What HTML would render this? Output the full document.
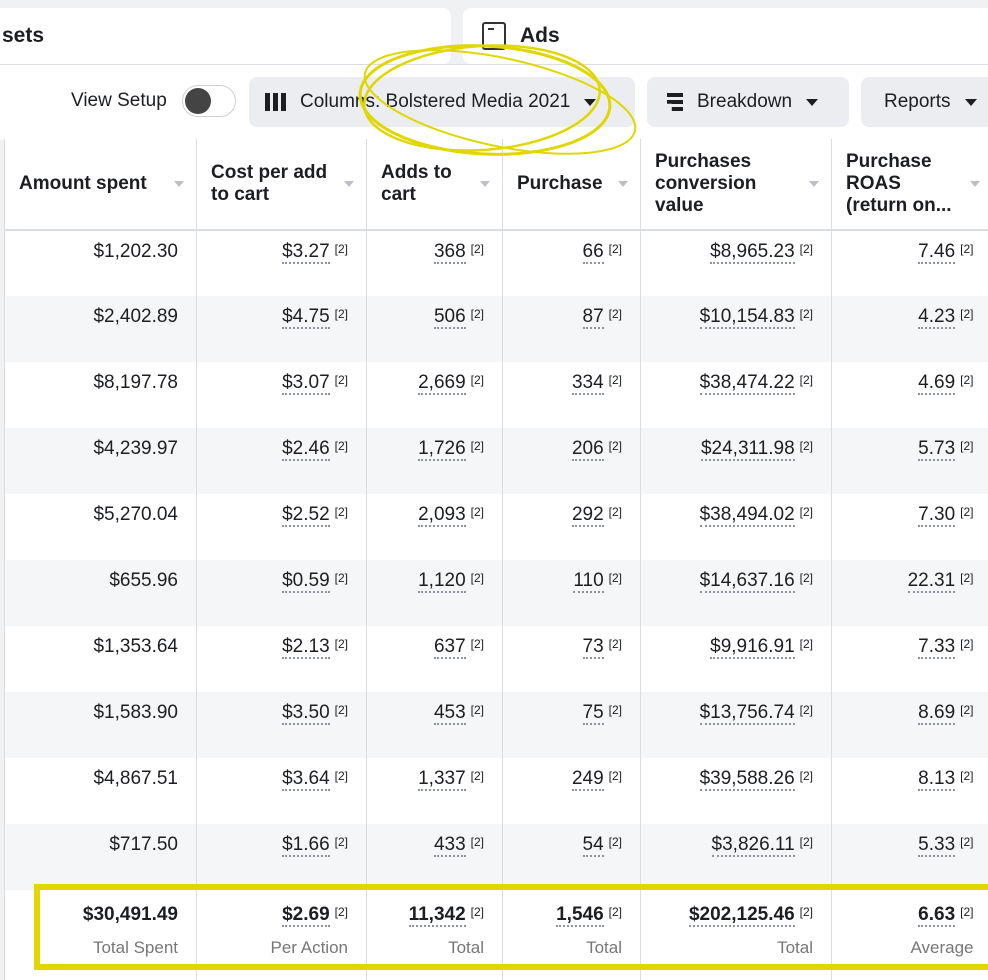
<!DOCTYPE html><html><head><style>
body{margin:0;width:988px;height:976px;overflow:hidden;background:#f0f1f3;font-family:"Liberation Sans",sans-serif;position:relative;color:#1c1e21}
.card{position:absolute;background:#fff;border-radius:8px}
.btn{position:absolute;top:77px;height:50px;background:#ebedf0;border-radius:8px;font-size:19px;display:flex;align-items:center;color:#1c1e21}
.tri{display:inline-block;width:0;height:0;border-left:6px solid transparent;border-right:6px solid transparent;border-top:7px solid #1c1e21;margin-left:14px}
table{position:absolute;left:4px;top:139px;border-collapse:collapse;background:#fff;table-layout:fixed;width:987px}
td,th{border-left:1px solid #dadde1;padding:0 18px 0 0;text-align:right;font-size:19px;vertical-align:top;white-space:nowrap;overflow:hidden}
th{height:90px;text-align:left;vertical-align:middle;padding-left:14px;font-weight:bold;border-bottom:2px solid #dadde1;position:relative;white-space:normal}
th .s{position:absolute;right:12px;top:42px;border-left:5px solid transparent;border-right:5px solid transparent;border-top:6px solid #bcc0c4}
td{height:66px;padding-top:10px;box-sizing:border-box}
tr.g td{background:#f5f6f7}
u{text-decoration:none;border-bottom:2px dotted #8d949e}
sup{font-size:12px;vertical-align:4px;margin-left:5px}
tr.t td{height:90px;padding-top:14px}
tr.t b{font-size:19px}
.l{display:block;color:#777;font-size:17px;margin-top:12px}
</style></head><body>
<div class="card" style="left:-10px;top:8px;width:461px;height:56px"></div>
<div class="card" style="left:463px;top:8px;width:540px;height:56px"></div>
<div style="position:absolute;left:2px;top:24px;font-size:21px;font-weight:bold">sets</div>
<div style="position:absolute;left:482px;top:22px;width:24px;height:28px;border:2px solid #333;border-radius:3px;box-sizing:border-box"><div style="width:6px;height:2px;background:#333;margin:4px 0 0 4px"></div></div>
<div style="position:absolute;left:520px;top:24px;font-size:21px;font-weight:bold">Ads</div>
<div style="position:absolute;left:0;top:64px;width:988px;height:75px;background:#fff;border-top:1px solid #dadde1"></div>
<div style="position:absolute;left:71px;top:90px;font-size:19px">View Setup</div>
<div style="position:absolute;left:182px;top:85px;width:54px;height:32px;border:1px solid #ccd0d5;border-radius:16px;box-sizing:border-box;background:#fff"><div style="width:26px;height:26px;border-radius:50%;background:#444;margin:2px"></div></div>
<div class="btn" style="left:249px;width:386px"><span style="margin-left:16px;display:inline-flex;gap:3px"><i style="width:5px;height:18px;background:#1c1e21"></i><i style="width:5px;height:18px;background:#1c1e21"></i><i style="width:5px;height:18px;background:#1c1e21"></i></span><span style="margin-left:14px">Columns: Bolstered Media 2021</span><span class="tri"></span></div>
<div class="btn" style="left:647px;width:202px"><span style="margin-left:20px;display:inline-block;width:16px;height:18px;background:linear-gradient(#1c1e21 0 4px,transparent 4px 7px,#1c1e21 7px 11px,transparent 11px 14px,#1c1e21 14px);clip-path:polygon(0 0,100% 0,100% 100%,30% 100%,30% 60%,0 60%)"></span><span style="margin-left:14px">Breakdown</span><span class="tri"></span></div>
<div class="btn" style="left:861px;width:140px"><span style="margin-left:23px">Reports</span><span class="tri"></span></div>
<table>
<colgroup><col style="width:192px"><col style="width:170px"><col style="width:136px"><col style="width:138px"><col style="width:191px"><col style="width:160px"></colgroup>
<tr><th>Amount spent<i class="s"></i></th><th>Cost per add<br>to cart<i class="s"></i></th><th>Adds to<br>cart<i class="s"></i></th><th>Purchase<i class="s"></i></th><th>Purchases<br>conversion<br>value<i class="s"></i></th><th>Purchase<br>ROAS<br>(return on...<i class="s"></i></th></tr>
<tr><td>$1,202.30</td><td><u>$3.27</u><sup>[2]</sup></td><td><u>368</u><sup>[2]</sup></td><td><u>66</u><sup>[2]</sup></td><td><u>$8,965.23</u><sup>[2]</sup></td><td><u>7.46</u><sup>[2]</sup></td></tr>
<tr class="g"><td>$2,402.89</td><td><u>$4.75</u><sup>[2]</sup></td><td><u>506</u><sup>[2]</sup></td><td><u>87</u><sup>[2]</sup></td><td><u>$10,154.83</u><sup>[2]</sup></td><td><u>4.23</u><sup>[2]</sup></td></tr>
<tr><td>$8,197.78</td><td><u>$3.07</u><sup>[2]</sup></td><td><u>2,669</u><sup>[2]</sup></td><td><u>334</u><sup>[2]</sup></td><td><u>$38,474.22</u><sup>[2]</sup></td><td><u>4.69</u><sup>[2]</sup></td></tr>
<tr class="g"><td>$4,239.97</td><td><u>$2.46</u><sup>[2]</sup></td><td><u>1,726</u><sup>[2]</sup></td><td><u>206</u><sup>[2]</sup></td><td><u>$24,311.98</u><sup>[2]</sup></td><td><u>5.73</u><sup>[2]</sup></td></tr>
<tr><td>$5,270.04</td><td><u>$2.52</u><sup>[2]</sup></td><td><u>2,093</u><sup>[2]</sup></td><td><u>292</u><sup>[2]</sup></td><td><u>$38,494.02</u><sup>[2]</sup></td><td><u>7.30</u><sup>[2]</sup></td></tr>
<tr class="g"><td>$655.96</td><td><u>$0.59</u><sup>[2]</sup></td><td><u>1,120</u><sup>[2]</sup></td><td><u>110</u><sup>[2]</sup></td><td><u>$14,637.16</u><sup>[2]</sup></td><td><u>22.31</u><sup>[2]</sup></td></tr>
<tr><td>$1,353.64</td><td><u>$2.13</u><sup>[2]</sup></td><td><u>637</u><sup>[2]</sup></td><td><u>73</u><sup>[2]</sup></td><td><u>$9,916.91</u><sup>[2]</sup></td><td><u>7.33</u><sup>[2]</sup></td></tr>
<tr class="g"><td>$1,583.90</td><td><u>$3.50</u><sup>[2]</sup></td><td><u>453</u><sup>[2]</sup></td><td><u>75</u><sup>[2]</sup></td><td><u>$13,756.74</u><sup>[2]</sup></td><td><u>8.69</u><sup>[2]</sup></td></tr>
<tr><td>$4,867.51</td><td><u>$3.64</u><sup>[2]</sup></td><td><u>1,337</u><sup>[2]</sup></td><td><u>249</u><sup>[2]</sup></td><td><u>$39,588.26</u><sup>[2]</sup></td><td><u>8.13</u><sup>[2]</sup></td></tr>
<tr class="g"><td style="height:64px">$717.50</td><td><u>$1.66</u><sup>[2]</sup></td><td><u>433</u><sup>[2]</sup></td><td><u>54</u><sup>[2]</sup></td><td><u>$3,826.11</u><sup>[2]</sup></td><td><u>5.33</u><sup>[2]</sup></td></tr>
<tr class="t"><td><b>$30,491.49</b><span class="l">Total Spent</span></td><td><b><u>$2.69</u></b><sup>[2]</sup><span class="l">Per Action</span></td><td><b><u>11,342</u></b><sup>[2]</sup><span class="l">Total</span></td><td><b><u>1,546</u></b><sup>[2]</sup><span class="l">Total</span></td><td><b><u>$202,125.46</u></b><sup>[2]</sup><span class="l">Total</span></td><td><b><u>6.63</u></b><sup>[2]</sup><span class="l">Average</span></td></tr>
</table>
<div style="position:absolute;left:34px;top:884px;width:960px;height:86px;border:6px solid #e0d700;box-sizing:border-box"></div>
<svg style="position:absolute;left:0;top:0" width="988" height="200"><g fill="none" stroke="#e0d700" stroke-width="3"><ellipse cx="485" cy="100" rx="125" ry="54" transform="rotate(3 485 100)"/><ellipse cx="500" cy="102" rx="138" ry="44" transform="rotate(12 500 102)" stroke-width="2"/><ellipse cx="482" cy="98" rx="118" ry="52" transform="rotate(-4 482 98)" stroke-width="2.5"/></g></svg>
</body></html>
